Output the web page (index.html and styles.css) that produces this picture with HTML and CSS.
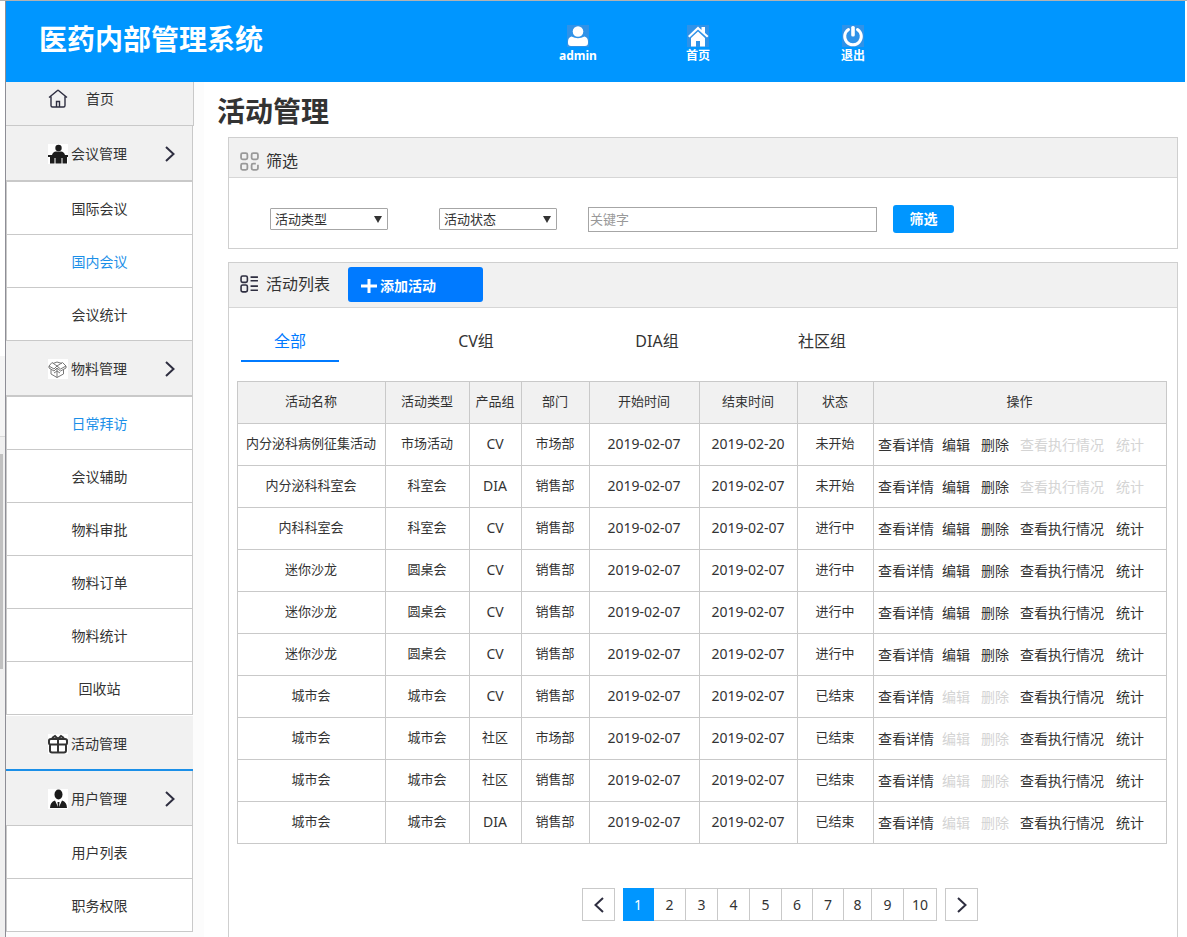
FILE: index.html
```html
<!DOCTYPE html>
<html lang="zh-CN">
<head>
<meta charset="utf-8">
<title>医药内部管理系统</title>
<link rel="stylesheet" href="styles.css">
</head>
<body>
<div class="frame">
  <div class="edge"><div class="edge-top"></div><div class="edge-mid"></div><div class="edge-track"><div class="edge-thumb"></div></div></div>
  <div class="app">
    <header class="topbar">
      <div class="brand">医药内部管理系统</div>
      <nav class="topnav">
        <a href="#" class="toplink"><svg class="topicon" viewBox="0 0 22 22"><circle cx="11" cy="6.500" r="5.300"/><path d="M4.500 11.500Q11 15 17.500 11.500Q21 12.500 21 16.500V18Q21 21 18 21H4Q1 21 1 18V16.500Q1 12.500 4.500 11.500Z"/></svg><span>admin</span></a>
        <a href="#" class="toplink"><svg class="topicon" viewBox="0 0 22 22"><path d="M1 11 11 1.500 14.500 5V2H18V8L21.500 11 20 12.500 11 4.500 2.500 12.500Z"/><path d="M4 13 11 6.500 18 13V21.500H13V16H9V21.500H4Z"/></svg><span>首页</span></a>
        <a href="#" class="toplink"><svg class="topicon" viewBox="0 0 22 22"><path class="power" d="M6.500 4.500A8.300 8.300 0 1 0 15.500 4.500"/><rect x="9.200" y="1" width="3.600" height="10.500" rx="1.500"/></svg><span>退出</span></a>
      </nav>
    </header>
    <div class="body">
      <aside class="sidebar">
        <a href="#" class="home"><svg class="home-icon" viewBox="0 0 20 20"><path d="M1 8.500 9.500 1.500Q10 1 10.500 1.500L19 8.500M3 7.500V16.500Q3 18 4.500 18H15.500Q17 18 17 16.500V7.500M8.500 18V12.500H11.500V18"/></svg><span>首页</span></a>
        <a href="#" class="group thick"><svg class="side-icon" viewBox="0 0 20 20"><circle cx="10.500" cy="4" r="3.200"/><path d="M4 11Q5 7.500 8 7.500H13Q16 7.500 17 11H20V13H0V11ZM2 13H19V19.500H14.500V14H13.500V19.500H7.500V14H6.500V19.500H2Z"/></svg><span>会议管理</span><svg class="chev" viewBox="0 0 10 16"><path d="M1 1 8.500 8 1 15"/></svg></a>
        <a href="#" class="sub">国际会议</a>
        <a href="#" class="sub current">国内会议</a>
        <a href="#" class="sub">会议统计</a>
        <a href="#" class="group thick"><svg class="side-icon line" viewBox="0 0 20 20"><path d="M9 7 4 3.500 1 7 6 10 9 7 14.500 3.500 18 7 12.500 10 9 7M1 7V9L6 12 9 9 12.500 12 18 9V7M3 10.500V15L9 18.500 15.500 15V10.500M9 10V18.500M9 12 6 14M9 12 12 14M5 4.500 9 3 14 4.500"/></svg><span>物料管理</span><svg class="chev" viewBox="0 0 10 16"><path d="M1 1 8.500 8 1 15"/></svg></a>
        <a href="#" class="sub current">日常拜访</a>
        <a href="#" class="sub">会议辅助</a>
        <a href="#" class="sub">物料审批</a>
        <a href="#" class="sub">物料订单</a>
        <a href="#" class="sub">物料统计</a>
        <a href="#" class="sub">回收站</a>
        <a href="#" class="group active"><svg class="side-icon gift" viewBox="0 0 20 20"><path d="M3 5H17Q19 5 19 6.500V9Q19 10.500 17 10.500H3Q1 10.500 1 9V6.500Q1 5 3 5ZM2 10.500V16.500Q2 18.500 4 18.500H16Q18 18.500 18 16.500V10.500M10 5V18.500M10 5 7 2 4 4M10 5 13 2 16 4"/></svg><span>活动管理</span></a>
        <a href="#" class="group"><svg class="side-icon" viewBox="0 0 20 20"><ellipse cx="10.500" cy="5.500" rx="4" ry="5"/><path d="M7 11.500 10 18 9.500 13H11.500L11 18 14 11.500Q19 13 19 19H2Q2 13 7 11.500Z"/></svg><span>用户管理</span><svg class="chev" viewBox="0 0 10 16"><path d="M1 1 8.500 8 1 15"/></svg></a>
        <a href="#" class="sub">用户列表</a>
        <a href="#" class="sub">职务权限</a>
      </aside>
      <main class="main">
        <h1 class="title">活动管理</h1>
        <section class="panel">
          <h2 class="panel-head"><svg class="head-icon grid-icon" viewBox="0 0 18 18"><rect x="1" y="1" width="6" height="6" rx="1.500"/><rect x="11" y="1" width="6" height="6" rx="1.500"/><rect x="1" y="11" width="6" height="6" rx="1.500"/><path d="M15 11H12.500Q11 11 11 12.500V15.500Q11 17 12.500 17H15.500Q17 17 17 15.500V12"/></svg><span>筛选</span></h2>
          <form class="filters">
            <div class="pick"><select aria-label="活动类型"><option>活动类型</option></select></div>
            <div class="pick"><select aria-label="活动状态"><option>活动状态</option></select></div>
            <input class="keyword" type="text" placeholder="关键字" aria-label="关键字">
            <button class="go" type="button">筛选</button>
          </form>
        </section>
        <section class="panel list">
          <div class="panel-head list-head"><svg class="head-icon list-icon" viewBox="0 0 18 18"><rect x="1" y="1" width="6" height="6" rx="1.500"/><rect x="1" y="9.500" width="6" height="6.500" rx="1.500"/><path d="M10 2H17M10 5.500H17M10 10.500H17M10 14.500H17"/></svg><h2 class="list-title">活动列表</h2><button class="add" type="button"><svg class="plus" viewBox="0 0 16 14"><path d="M8 0V14M0 7H16"/></svg>添加活动</button></div>
          <div class="tabs"><button type="button" class="tab on">全部</button><button type="button" class="tab">CV组</button><button type="button" class="tab">DIA组</button><button type="button" class="tab">社区组</button></div>
          <table class="grid">
            <colgroup><col class="c-name"><col class="c-type"><col class="c-team"><col class="c-dept"><col class="c-start"><col class="c-end"><col class="c-state"><col></colgroup>
            <thead><tr><th>活动名称</th><th>活动类型</th><th>产品组</th><th>部门</th><th>开始时间</th><th>结束时间</th><th>状态</th><th>操作</th></tr></thead>
            <tbody id="rows"></tbody>
          </table>
          <nav class="pager" aria-label="分页">
            <button type="button" class="step" aria-label="上一页"><svg class="chev" viewBox="0 0 10 16"><path d="M9 1 1.500 8 9 15"/></svg></button>
            <div class="pages"><button type="button" class="page now">1</button><button type="button" class="page">2</button><button type="button" class="page">3</button><button type="button" class="page">4</button><button type="button" class="page">5</button><button type="button" class="page">6</button><button type="button" class="page">7</button><button type="button" class="page">8</button><button type="button" class="page">9</button><button type="button" class="page">10</button></div>
            <button type="button" class="step" aria-label="下一页"><svg class="chev" viewBox="0 0 10 16"><path d="M1 1 8.500 8 1 15"/></svg></button>
          </nav>
        </section>
      </main>
    </div>
  </div>
</div>
<script src="rows.js"></script>
</body>
</html>
```
FILE: rows.js
```js
const d = "2019-02-07";
const data = [
  ["内分泌科病例征集活动", "市场活动", "CV", "市场部", d, "2019-02-20", "未开始"],
  ["内分泌科科室会", "科室会", "DIA", "销售部", d, d, "未开始"],
  ["内科科室会", "科室会", "CV", "销售部", d, d, "进行中"],
  ["迷你沙龙", "圆桌会", "CV", "销售部", d, d, "进行中"],
  ["迷你沙龙", "圆桌会", "CV", "销售部", d, d, "进行中"],
  ["迷你沙龙", "圆桌会", "CV", "销售部", d, d, "进行中"],
  ["城市会", "城市会", "CV", "销售部", d, d, "已结束"],
  ["城市会", "城市会", "社区", "市场部", d, d, "已结束"],
  ["城市会", "城市会", "社区", "销售部", d, d, "已结束"],
  ["城市会", "城市会", "DIA", "销售部", d, d, "已结束"]
];
const actions = ["查看详情", "编辑", "删除", "查看执行情况", "统计"];
const locked = { "未开始": [3, 4], "进行中": [], "已结束": [1, 2] };
document.getElementById("rows").innerHTML = data.map(row => {
  const cells = row.map(t => `<td${/^[\w-]+$/.test(t) ? ' class="latin"' : ""}>${t}</td>`).join("");
  const ops = actions.map((t, i) => `<button type="button" class="act"${locked[row[6]].includes(i) ? " disabled" : ""}>${t}</button>`).join("");
  return `<tr>${cells}<td class="ops"><div class="acts">${ops}</div></td></tr>`;
}).join("");
```
FILE: styles.css
```css
* { box-sizing: border-box; }
body {
  margin: 0;
  background: #fff;
  color: #333;
  font: 14px/20px "Noto Sans", "Noto Sans CJK SC", sans-serif;
}
button, input, select { font: inherit; color: inherit; margin: 0; padding: 0; border: 0; background: none; }
a { color: inherit; text-decoration: none; }
h1, h2 { margin: 0; font-weight: 400; }
svg { flex: none; }

.frame { display: flex; min-height: 100vh; border-top: 1px solid #b2b2b2; }
.edge { flex: none; width: 5px; display: flex; flex-direction: column; }
.edge-top { height: 355px; }
.edge-mid { height: 81px; background: #f5f5f5; border-bottom: 1px solid #dadada; }
.edge-track { flex: 1; background: #f0f0f0; padding-top: 17px; }
.edge-thumb { width: 3px; height: 215px; background: #c1c1c1; }
.app { flex: 1; min-width: 0; display: flex; flex-direction: column; border-left: 1px solid #8e8e96; }

.topbar { display: flex; height: 81px; margin-right: 2px; background: #0096ff; color: #fff; }
.brand { width: 512px; padding: 17px 0 0 33px; font-size: 28px; line-height: 42px; font-weight: 700; }
.topnav { display: grid; grid-template-columns: 120px 155px 120px; padding-top: 24px; }
.toplink { width: 120px; display: flex; flex-direction: column; align-items: center; font-size: 12px; line-height: 18px; font-weight: 700; }
.topicon { width: 22px; height: 22px; background: #2f92e8; fill: #fff; }
.power { fill: none; stroke: #fff; stroke-width: 3; stroke-linecap: round; }

.body { flex: 1; display: flex; }
.sidebar { flex: none; width: 198px; padding-right: 11px; background: #fcfcfc; }
.home { display: flex; align-items: center; gap: 18px; height: 44px; margin-right: -1px; padding: 0 0 10px 42px; background: #f1f1f1; border: solid #c9c9c9; border-width: 0 1px 1px 0; }
.home-icon { width: 20px; height: 20px; fill: none; stroke: #2e2e40; stroke-width: 1.4; }
.group { display: flex; align-items: center; height: 55px; padding: 2px 0 0 42px; background: #f1f1f1; border: solid #c9c9c9; border-width: 0 1px 1px 0; }
.group.thick { height: 56px; border-bottom-width: 2px; }
.group.active { height: 56px; border-top: 1px solid #fff; border-right: 0; border-bottom: 2px solid #1b8fe8; }
.group span { margin: 0 38px 0 3px; }
.side-icon { width: 20px; height: 20px; background: #fff; fill: #1c1c1c; }
.line { fill: none; stroke: #777; stroke-width: 1; }
.gift { fill: none; stroke: #333; stroke-width: 2; }
.chev { width: 10px; height: 16px; fill: none; stroke: #2e2e40; stroke-width: 2; }
.sub { display: flex; align-items: center; justify-content: center; height: 53px; padding-top: 2px; background: #fff; border: solid #c9c9c9; border-width: 0 1px 1px 1px; }
.current { color: #1b8fe8; }

.main { flex: 1; min-width: 0; display: flex; flex-direction: column; padding: 8px 9px 0 13px; }
.title { font-size: 28px; line-height: 42px; font-weight: 700; margin-bottom: 5px; }
.panel { margin-left: 11px; border: 1px solid #cfcfcf; }
.panel-head { display: flex; align-items: center; gap: 7px; height: 40px; padding: 7px 0 0 11px; font-size: 16px; line-height: 24px; background: #f1f1f1; border-bottom: 1px solid #d6d6d6; }
.head-icon { width: 19px; height: 19px; fill: none; }
.grid-icon { stroke: #999; stroke-width: 1.7; }
.list-icon { stroke: #2e2e40; stroke-width: 1.5; }
.filters { display: flex; align-items: center; height: 70px; padding: 12px 0 0 41px; font-size: 13px; }
.pick { position: relative; width: 118px; margin-right: 51px; }
.pick + .keyword { margin-left: -20px; }
.pick select { display: block; width: 100%; height: 22px; padding-left: 4px; border: 1px solid #a6a6a6; border-radius: 1px; appearance: none; background: #fff; }
.pick::after { content: ""; position: absolute; right: 6px; top: 8px; border: solid transparent; border-width: 7px 4px 0; border-top-color: #333; pointer-events: none; }
.keyword { width: 289px; height: 25px; padding: 0 1px; border: 1px solid #a6a6a6; }
.keyword::placeholder { color: #999; }
.go { width: 61px; height: 28px; margin-left: 16px; border-radius: 3px; background: #0096ff; color: #fff; font-size: 14px; font-weight: 700; }

.list { flex: 1; margin-top: 13px; border-bottom: 0; }
.list-head { height: 45px; padding: 0 0 2px 11px; }
.list-title { font-size: 16px; width: 75px; }
.add { display: flex; align-items: center; gap: 3px; width: 135px; height: 35px; padding: 3px 0 0 13px; border-radius: 3px; background: #007aff; color: #fff; font-size: 14px; font-weight: 700; }
.plus { width: 16px; height: 14px; stroke: #fff; stroke-width: 3; }
.tabs { display: grid; grid-template-columns: 186px 181px 165px 98px; padding: 14px 0 0 12px; }
.tab { width: 98px; height: 40px; font-size: 16px; border-bottom: 2px solid transparent; }
.tab.on { color: #007aff; border-color: #007aff; }

.grid { width: calc(100% - 18px); margin: 19px 10px 0 8px; border-collapse: collapse; table-layout: fixed; font-size: 13px; }
.c-name { width: 148px; }
.c-type { width: 84px; }
.c-team { width: 52px; }
.c-dept { width: 68px; }
.c-start { width: 110px; }
.c-end { width: 98px; }
.c-state { width: 76px; }
.grid th, .grid td { height: 42px; padding: 0 1px 3px 0; border: 1px solid #c9c9c9; text-align: center; font-weight: 400; white-space: nowrap; }
.grid th { background: #f1f1f1; }
.grid .latin { font-size: 14px; padding-bottom: 2px; }
.grid .ops { padding: 1px 0 0 4px; }
.acts { display: grid; grid-template-columns: 64px 39px 39px 96px 28px; font-size: 14px; }
.act { text-align: left; }
.act:disabled { color: #d4d4d4; }

.pager { display: flex; justify-content: center; gap: 8px; padding: 44px 0 16px 154px; }
.step { display: flex; align-items: center; justify-content: center; width: 33px; height: 33px; border: 1px solid #c9c9c9; }
.pages { display: grid; grid-template-columns: 31px repeat(4, 32px) 31px 31px 28px 32px 33px; }
.page { height: 33px; border: solid #c9c9c9; border-width: 1px 1px 1px 0; }
.page.now { background: #0096ff; border-color: #0096ff; color: #fff; }
```
